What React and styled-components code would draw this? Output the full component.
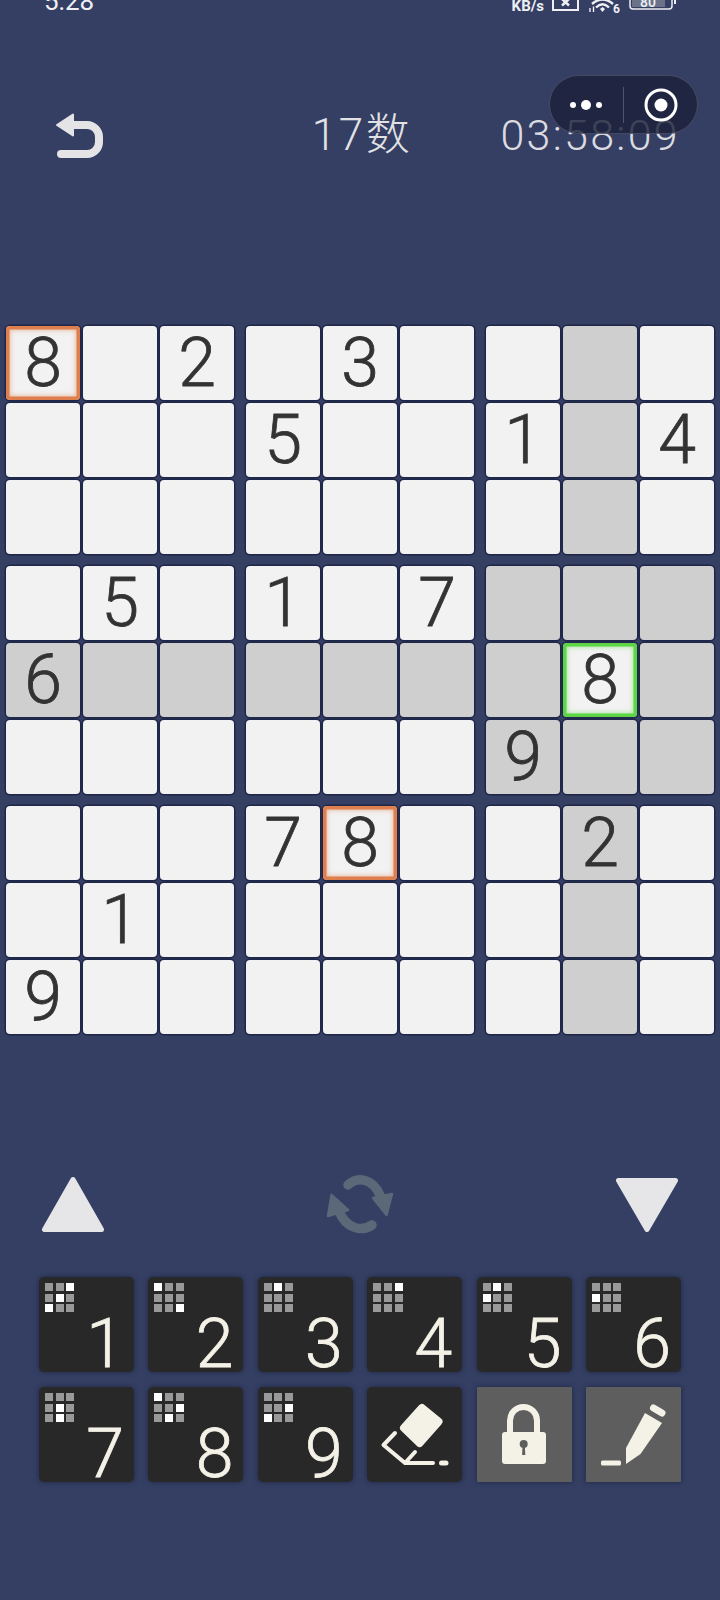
import React from 'react';
import styled, { createGlobalStyle } from 'styled-components';

const GlobalStyle = createGlobalStyle`
  html, body {
    margin: 0;
    padding: 0;
    background: #343f63;
  }
`;

const Page = styled.div`
  position: relative;
  width: 720px;
  height: 1600px;
  overflow: hidden;
  background: #343f63;
  font-family: Roboto, "Noto Sans CJK SC", sans-serif;
`;

/* Status bar: the phone's top edge cuts through it */
const StatusBar = styled.div`
  display: flex;
  align-items: flex-end;
  height: 13px;
  padding-left: 44px;
  color: #eef0f4;
`;

const Clock = styled.span`
  font-size: 26px;
  line-height: 24px;
  margin-right: auto;
`;

const Speed = styled.span`
  font-size: 15px;
  font-weight: 700;
  line-height: 13px;
  margin-right: 8px;
`;

const StatusIcons = styled.svg`
  display: block;
  margin-right: 40px;
`;

const Header = styled.header`
  display: grid;
  grid-template-columns: 1fr auto 1fr;
  align-items: center;
  height: 60px;
  margin-top: 92px;
  padding: 0 40px;
`;

const Title = styled.div`
  padding-left: 4px;
  color: #e2e2e5;
  font-size: 44px;
  font-weight: 300;
  line-height: 60px;
  letter-spacing: 2.5px;
`;

const Timer = styled.div`
  justify-self: end;
  color: #dcdce0;
  font-size: 43px;
  font-weight: 300;
  line-height: 58px;
  letter-spacing: 2.3px;
`;

/* WeChat mini program capsule, sits above the timer */
const Capsule = styled.div`
  position: absolute;
  top: 75px;
  left: 549px;
  display: flex;
  align-items: center;
  box-sizing: border-box;
  width: 149px;
  height: 59px;
  border: 1.5px solid rgba(255, 255, 255, 0.16);
  border-radius: 30px;
  background: rgba(28, 33, 58, 0.82);
`;

const CapsuleDivider = styled.div`
  width: 1px;
  height: 36px;
  background: rgba(255, 255, 255, 0.22);
`;

const CapsuleSide = styled.div`
  display: flex;
  flex: 1;
  align-items: center;
  justify-content: center;
`;

const Board = styled.div`
  display: grid;
  grid-template-columns: repeat(3, 228px);
  gap: 12px;
  margin-top: 161px;
  padding-left: 6px;
`;

const Box = styled.div`
  display: grid;
  grid-template-columns: repeat(3, 74px);
  grid-auto-rows: 74px;
  gap: 3px;
`;

const ringColors = { orange: '#df7f4e', green: '#5dd646' };

const Cell = styled.div`
  display: flex;
  align-items: center;
  justify-content: center;
  border-radius: 4px;
  background: ${(p) => (p.$shaded ? '#cfcfcf' : '#f2f2f2')};
  box-shadow: 0 0 0 1.5px #1f2748
    ${(p) => (p.$ring ? `, inset 0 0 0 3.5px ${ringColors[p.$ring]}, inset 0 0 4px 4.5px ${ringColors[p.$ring]}77` : '')};
  color: #333333;
  font-size: 68px;
  font-weight: 300;
  line-height: 1;
  -webkit-text-stroke: 0.8px #333333;
`;

const Controls = styled.div`
  display: flex;
  align-items: center;
  justify-content: space-between;
  margin-top: 131px;
  padding: 0 40px;
`;

const Pad = styled.div`
  display: grid;
  grid-template-columns: repeat(6, 95px);
  grid-auto-rows: 95px;
  column-gap: 14.4px;
  row-gap: 15px;
  margin-top: 32px;
  padding-left: 39px;
`;

const Key = styled.div`
  display: flex;
  flex-direction: column;
  box-sizing: border-box;
  padding: 6px 10px 0 6px;
  border-radius: 5px;
  background: #282828;
  box-shadow: 0 0 5px rgba(24, 29, 52, 0.7);
  color: #f4f1e7;
`;

const IconKey = styled.div`
  display: flex;
  border-radius: ${(p) => (p.$active ? '1px' : '5px')};
  background: ${(p) => (p.$active ? '#5e5e5e' : '#282828')};
  box-shadow: 0 0 5px rgba(24, 29, 52, 0.7);
`;

const MiniGrid = styled.div`
  display: grid;
  grid-template-columns: repeat(3, 8px);
  grid-auto-rows: 8px;
  gap: 2.7px;
  align-self: flex-start;
`;

const MiniDot = styled.span`
  background: ${(p) => (p.$on ? '#ffffff' : '#999999')};
`;

const KeyDigit = styled.span`
  align-self: flex-end;
  margin-top: auto;
  font-size: 68px;
  font-weight: 300;
  line-height: 56px;
  -webkit-text-stroke: 0.8px #f4f1e7;
`;

const puzzle = [
  '8.2.3....',
  '...5..1.4',
  '.........',
  '.5.1.7...',
  '6......8.',
  '......9..',
  '...78..2.',
  '.1.......',
  '9........',
];

const selected = { row: 4, col: 7 };
const rings = { '0-0': 'orange', '6-4': 'orange', '4-7': 'green' };

// which squares of the little 3x3 map are lit on each number key
const keyMaps = {
  1: [2, 4, 6],
  2: [0, 8],
  3: [1],
  4: [2],
  5: [1, 3],
  6: [3],
  7: [4, 7],
  8: [0, 5, 7],
  9: [5, 6],
};

const isShaded = (row, col) =>
  row === selected.row ||
  col === selected.col ||
  (Math.floor(row / 3) === Math.floor(selected.row / 3) &&
    Math.floor(col / 3) === Math.floor(selected.col / 3));

const boxes = [];
for (let b = 0; b < 9; b++) {
  const cells = [];
  for (let i = 0; i < 9; i++) {
    cells.push({
      row: Math.floor(b / 3) * 3 + Math.floor(i / 3),
      col: (b % 3) * 3 + (i % 3),
    });
  }
  boxes.push(cells);
}

const BackIcon = () => (
  <svg width="80" height="60" viewBox="0 0 80 60" fill="none">
    <path d="M17 20 33 9.500v21z" fill="#e4e4e6" stroke="#e4e4e6" strokeWidth="2" strokeLinejoin="round" />
    <path d="M30 20H47a12 12 0 0 1 12 12v5a12 12 0 0 1-12 12H21" stroke="#e4e4e6" strokeWidth="8" strokeLinecap="round" />
  </svg>
);

const Triangle = ({ points }) => (
  <svg width="66" height="80" viewBox="0 0 66 80">
    <polygon points={points} fill="#e6e6e9" stroke="#e6e6e9" strokeWidth="5" strokeLinejoin="round" />
  </svg>
);

const RefreshIcon = () => (
  <svg width="88" height="80" viewBox="0 0 88 80" fill="none">
    <path d="M32 20C41 11 56 13 64 30" stroke="#5b6878" strokeWidth="9.500" strokeLinecap="round" />
    <path d="M76 29 70.500 50 57 33z" fill="#5b6878" stroke="#5b6878" strokeWidth="2.500" strokeLinejoin="round" />
    <path d="M56 60C46 67 30 64 23 46" stroke="#5b6878" strokeWidth="9.500" strokeLinecap="round" />
    <path d="M15.500 30 32 45 12 51z" fill="#5b6878" stroke="#5b6878" strokeWidth="2.500" strokeLinejoin="round" />
  </svg>
);

const EraserIcon = () => (
  <svg width="95" height="95" viewBox="0 0 95 95" fill="none">
    <path d="M55 21 71.500 34.500 52.500 56 37 41z" fill="#f4f1e7" stroke="#f4f1e7" strokeWidth="8" strokeLinejoin="round" />
    <path d="M28 46 16.500 58 38 76H66M38 76 48 65" stroke="#f4f1e7" strokeWidth="4" strokeLinecap="round" strokeLinejoin="round" />
    <path d="M74.500 76H79" stroke="#f4f1e7" strokeWidth="5" strokeLinecap="round" />
  </svg>
);

const LockIcon = () => (
  <svg width="95" height="95" viewBox="0 0 95 95" fill="none">
    <path d="M33 45V33.500a13.500 13.500 0 0 1 27 0V45" stroke="#f4f1e7" strokeWidth="6" />
    <rect x="25" y="45" width="44" height="32" rx="3" fill="#f4f1e7" />
    <circle cx="46.700" cy="57" r="4" fill="#5e5e5e" />
    <path d="M45.500 59h2.400l.4 9h-3.200z" fill="#5e5e5e" />
  </svg>
);

const PencilIcon = () => (
  <svg width="95" height="95" viewBox="0 0 95 95" fill="none">
    <path d="M59 26 76 36 54.500 67 40 77V61z" fill="#f4f1e7" />
    <path d="M67.500 21 76 26" stroke="#f4f1e7" strokeWidth="7" strokeLinecap="round" />
    <rect x="15" y="73.500" width="20" height="5" rx="1.500" fill="#f4f1e7" />
  </svg>
);

export default function App() {
  return (
    <Page>
      <GlobalStyle />
      <StatusBar>
        <Clock>5:28</Clock>
        <Speed>KB/s</Speed>
        <StatusIcons width="128" height="13" viewBox="0 0 128 13" fill="none">
          <path d="M1 -4V10H26V-4" stroke="#eef0f4" strokeWidth="2" />
          <path d="M10 -1 17 5.500M17 -1 10 5.500" stroke="#eef0f4" strokeWidth="2.500" />
          <path d="M40 4Q50.500 -5 61 4M44 7.500Q50.500 1 57 7.500" stroke="#eef0f4" strokeWidth="2.400" />
          <path d="M48 9 50.500 7 53 9 50.500 12z" fill="#eef0f4" />
          <path d="M38 8V12M41.500 6.500V12" stroke="#eef0f4" strokeWidth="1.400" />
          <text x="61" y="13" fontSize="12" fontWeight="700" fill="#eef0f4">6</text>
          <rect x="78" y="-6" width="42" height="15" rx="3" stroke="#eef0f4" strokeWidth="1.500" />
          <rect x="80" y="-4" width="33" height="11" fill="#6a7188" />
          <text x="88" y="6.500" fontSize="14" fontWeight="500" fill="#eef0f4">80</text>
          <rect x="122" y="0" width="2" height="4" fill="#eef0f4" />
        </StatusIcons>
      </StatusBar>

      <Header>
        <BackIcon />
        <Title>17数</Title>
        <Timer>03:58:09</Timer>
      </Header>

      <Capsule>
        <CapsuleSide>
          <svg width="44" height="14" viewBox="0 0 44 14">
            <circle cx="8" cy="7" r="3" fill="#fff" />
            <circle cx="21" cy="7" r="5" fill="#fff" />
            <circle cx="34" cy="7" r="3" fill="#fff" />
          </svg>
        </CapsuleSide>
        <CapsuleDivider />
        <CapsuleSide>
          <svg width="36" height="36" viewBox="0 0 36 36">
            <circle cx="18" cy="18" r="15" fill="none" stroke="#fff" strokeWidth="3" />
            <circle cx="18" cy="18" r="6.500" fill="#fff" />
          </svg>
        </CapsuleSide>
      </Capsule>

      <Board>
        {boxes.map((cells, b) => (
          <Box key={b}>
            {cells.map(({ row, col }) => {
              const value = puzzle[row][col];
              const ring = rings[`${row}-${col}`];
              return (
                <Cell key={col} $shaded={isShaded(row, col) && !ring} $ring={ring}>
                  {value === '.' ? '' : value}
                </Cell>
              );
            })}
          </Box>
        ))}
      </Board>

      <Controls>
        <Triangle points="33,14.500 4.500,64.500 61.500,64.500" />
        <RefreshIcon />
        <Triangle points="4.500,15.500 61.500,15.500 33,64.500" />
      </Controls>

      <Pad>
        {Object.keys(keyMaps).map((n) => (
          <Key key={n}>
            <MiniGrid>
              {[0, 1, 2, 3, 4, 5, 6, 7, 8].map((i) => (
                <MiniDot key={i} $on={keyMaps[n].includes(i)} />
              ))}
            </MiniGrid>
            <KeyDigit>{n}</KeyDigit>
          </Key>
        ))}
        <IconKey><EraserIcon /></IconKey>
        <IconKey $active><LockIcon /></IconKey>
        <IconKey $active><PencilIcon /></IconKey>
      </Pad>
    </Page>
  );
}
